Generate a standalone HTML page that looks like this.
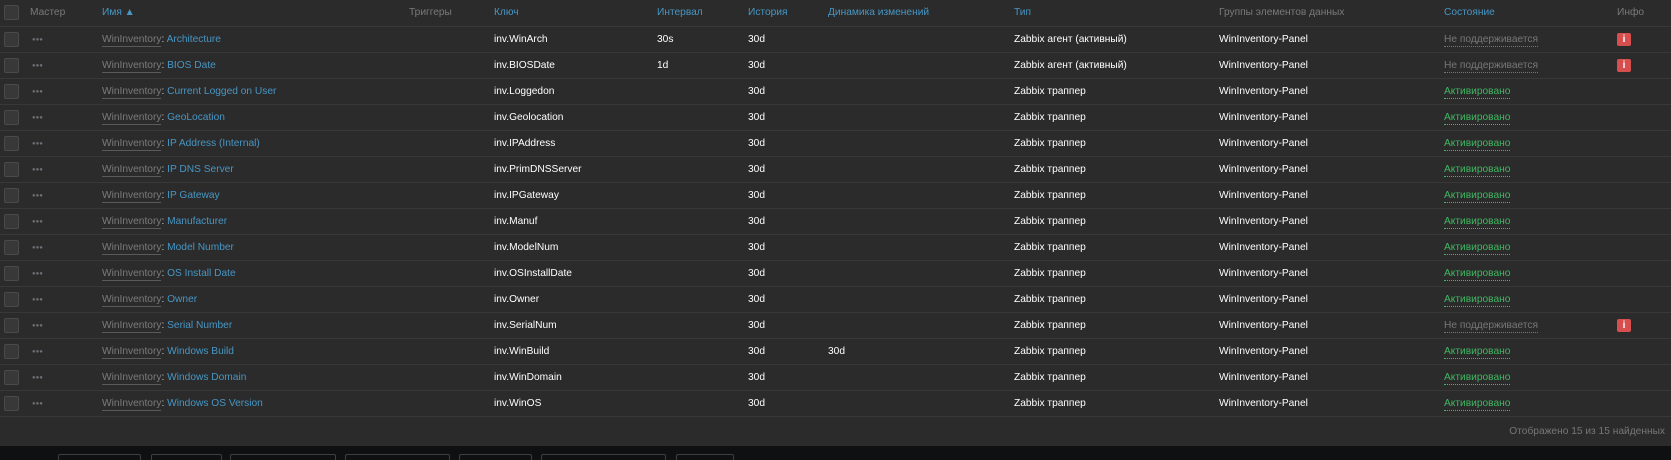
<!DOCTYPE html>
<html style="height:460px;overflow:hidden"><head><meta charset="utf-8"><style>
body{margin:0;width:1671px;height:460px;overflow:hidden;background:#2b2b2b;font-family:"Liberation Sans",Arial,sans-serif;font-size:10.2px;color:#f2f2f2;position:relative}
.r{position:absolute;left:0;width:1671px;height:26px;border-bottom:1px solid #383838;box-sizing:border-box}
.c{position:absolute;top:0;line-height:25px;white-space:nowrap}
.cb{position:absolute;left:4px;top:5px;width:13px;height:13px;border:1px solid #4a4a4a;background:#383838;border-radius:2px}
.h{color:#7a7a7a}.b{color:#4796c4}
.dots{color:#6b6f73;font-size:6px;left:32px;top:1px}
.m{color:#7b7b7b;border-bottom:1px solid #5a5a5a;line-height:12px;display:inline-block}
.k{color:#fff}
.ns{color:#777;border-bottom:1px dotted #777;line-height:12px;display:inline-block}
.ok{color:#3fb860;border-bottom:1px dotted #3fb860;line-height:12px;display:inline-block}
.i{position:absolute;left:1617px;top:6px;width:14px;height:13px;background:#d64e4e;border-radius:2px;color:#fff;font-size:10px;font-weight:bold;text-align:center;line-height:13px}
.btn{position:absolute;top:454px;height:6px;border:1px solid #3f3f3f;border-bottom:none;box-sizing:border-box;border-radius:2px 2px 0 0;background:#0f1012}
</style></head><body>
<div class="r" style="top:0;height:27px"><div class="cb"></div>
<div class="c h" style="left:30px">Мастер</div><div class="c b" style="left:102px">Имя ▲</div>
<div class="c h" style="left:409px">Триггеры</div><div class="c b" style="left:494px">Ключ</div>
<div class="c b" style="left:657px">Интервал</div><div class="c b" style="left:748px">История</div>
<div class="c b" style="left:828px">Динамика изменений</div><div class="c b" style="left:1014px">Тип</div>
<div class="c h" style="left:1219px">Группы элементов данных</div><div class="c b" style="left:1444px">Состояние</div>
<div class="c h" style="left:1617px">Инфо</div></div>
<div id="rows"></div>
<div class="c" style="position:absolute;top:419px;right:6px;left:auto;color:#777">Отображено 15 из 15 найденных</div>
<div style="position:absolute;top:446px;left:0;width:1671px;height:14px;background:#0f1012"></div>
<div class="btn" style="left:58px;width:83px"></div><div class="btn" style="left:151px;width:71px"></div>
<div class="btn" style="left:230px;width:106px"></div><div class="btn" style="left:345px;width:105px"></div>
<div class="btn" style="left:459px;width:73px"></div><div class="btn" style="left:541px;width:125px"></div>
<div class="btn" style="left:676px;width:58px"></div>
<script>
var d=[["Architecture","inv.WinArch","30s","","Zabbix агент (активный)",0],
["BIOS Date","inv.BIOSDate","1d","","Zabbix агент (активный)",0],
["Current Logged on User","inv.Loggedon","","","Zabbix траппер",1],
["GeoLocation","inv.Geolocation","","","Zabbix траппер",1],
["IP Address (Internal)","inv.IPAddress","","","Zabbix траппер",1],
["IP DNS Server","inv.PrimDNSServer","","","Zabbix траппер",1],
["IP Gateway","inv.IPGateway","","","Zabbix траппер",1],
["Manufacturer","inv.Manuf","","","Zabbix траппер",1],
["Model Number","inv.ModelNum","","","Zabbix траппер",1],
["OS Install Date","inv.OSInstallDate","","","Zabbix траппер",1],
["Owner","inv.Owner","","","Zabbix траппер",1],
["Serial Number","inv.SerialNum","","","Zabbix траппер",0],
["Windows Build","inv.WinBuild","","30d","Zabbix траппер",1],
["Windows Domain","inv.WinDomain","","","Zabbix траппер",1],
["Windows OS Version","inv.WinOS","","","Zabbix траппер",1]];
var h="";d.forEach(function(x,i){var t=27+i*26;
h+='<div class="r" style="top:'+t+'px"><div class="cb"></div><div class="c dots">●●●</div>'+
'<div class="c" style="left:102px"><span class="m">WinInventory</span><span style="color:#ccc">: </span><span class="b">'+x[0]+'</span></div>'+
'<div class="c k" style="left:494px">'+x[1]+'</div><div class="c k" style="left:657px">'+x[2]+'</div>'+
'<div class="c k" style="left:748px">30d</div><div class="c k" style="left:828px">'+x[3]+'</div>'+
'<div class="c k" style="left:1014px">'+x[4]+'</div><div class="c k" style="left:1219px">WinInventory-Panel</div>'+
'<div class="c" style="left:1444px">'+(x[5]?'<span class="ok">Активировано</span>':'<span class="ns">Не поддерживается</span>')+'</div>'+
(x[5]?'':'<div class="i">i</div>')+'</div>';});
document.getElementById("rows").innerHTML=h;
</script>
</body></html>
